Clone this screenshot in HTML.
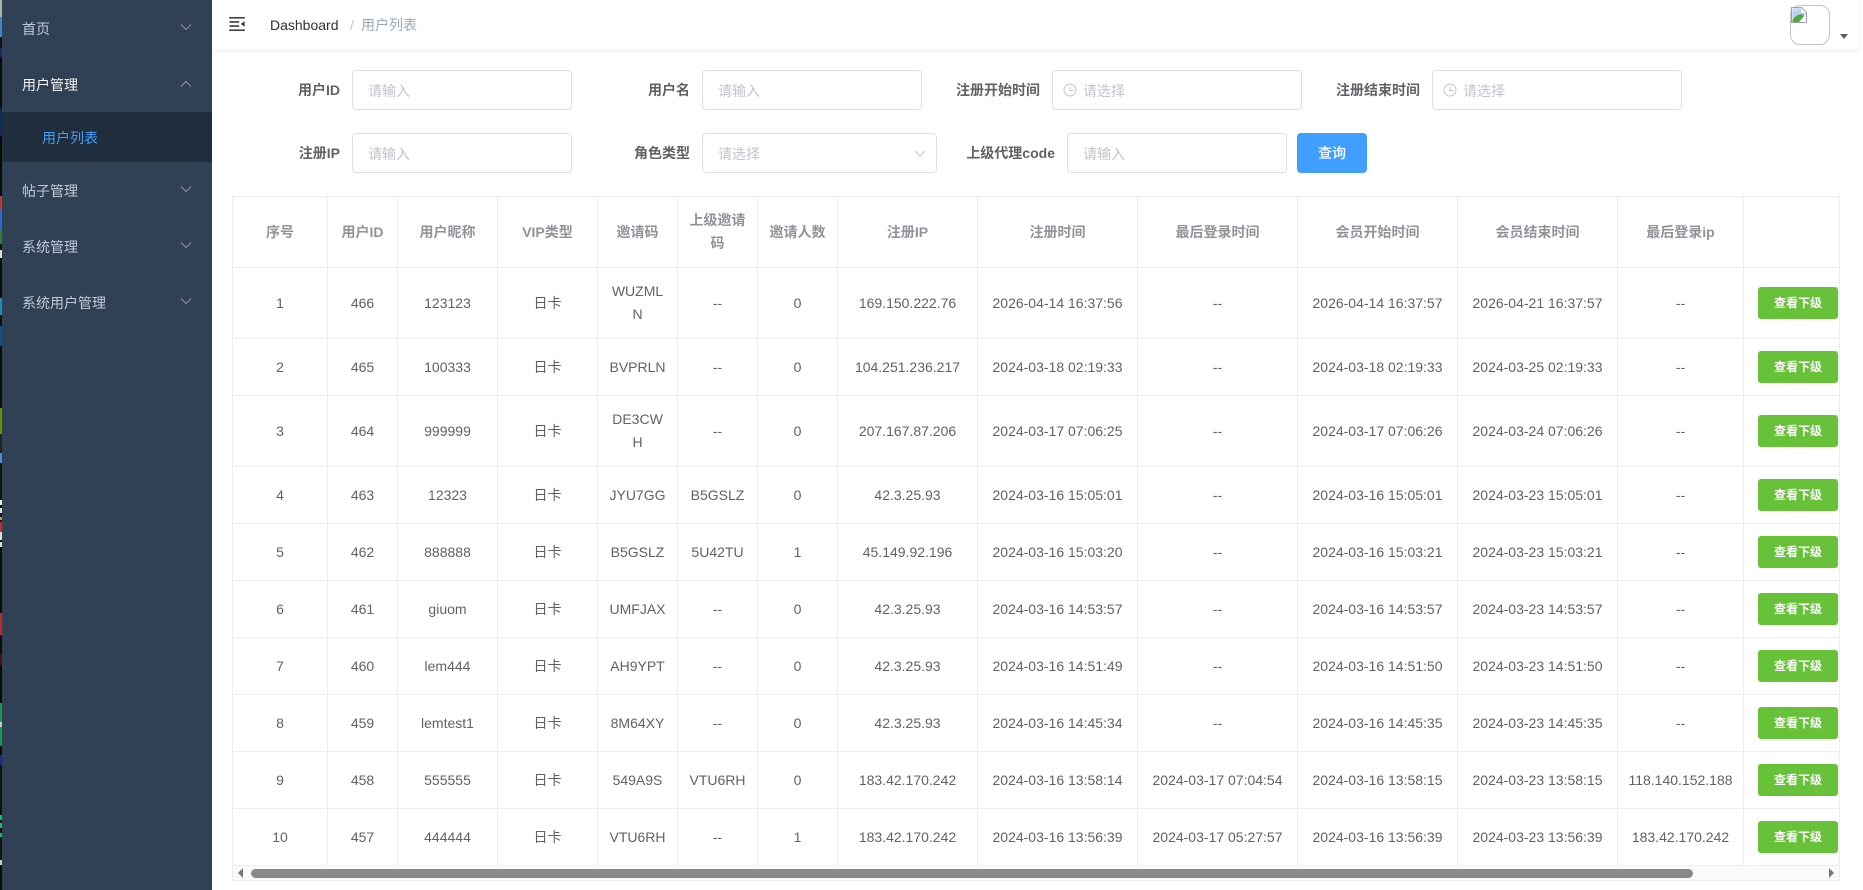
<!DOCTYPE html>
<html lang="zh-CN"><head><meta charset="utf-8"><title>用户列表</title>
<style>
*{box-sizing:border-box}
html,body{margin:0;padding:0;width:1863px;height:890px;overflow:hidden;background:#fff;font-family:"Liberation Sans","Noto Sans CJK SC",sans-serif;font-size:14px;color:#606266}
#strip{position:absolute;left:0;top:0;width:2px;height:890px;background:linear-gradient(to bottom,#b0b0b0 0,#b0b0b0 17px,#3a87c8 17px,#3a87c8 37px,#111 37px,#111 48px,#1a2a5a 48px,#1a2a5a 57px,#0a0a0a 57px,#0a0a0a 108px,#0f2a5c 108px,#0f2a5c 136px,#0a0a0a 136px,#0a0a0a 196px,#c0392b 196px,#c0392b 210px,#2a6ad0 210px,#2a6ad0 230px,#2e7d32 230px,#2e7d32 244px,#111 244px,#111 250px,#ddd 250px,#ddd 258px,#0a0a0a 258px,#0a0a0a 298px,#1a8fb5 298px,#1a8fb5 315px,#111 315px,#111 326px,#0e4f8a 326px,#0e4f8a 346px,#0a0a0a 346px,#0a0a0a 408px,#6b8e00 408px,#6b8e00 434px,#222 434px,#222 453px,#4a90d9 453px,#4a90d9 463px,#111 463px,#111 500px,#eee 500px,#eee 505px,#111 505px,#111 508px,#ddd 508px,#ddd 513px,#111 513px,#111 517px,#e89000 517px,#e89000 520px,#111 520px,#111 522px,#c62828 522px,#c62828 532px,#ddd 532px,#ddd 540px,#111 540px,#111 542px,#ddd 542px,#ddd 547px,#0a0a0a 547px,#0a0a0a 613px,#c62828 613px,#c62828 635px,#0a0a0a 635px,#0a0a0a 654px,#4a1020 654px,#4a1020 665px,#0a0a0a 665px,#0a0a0a 703px,#1a9a4a 703px,#1a9a4a 722px,#ccc 722px,#ccc 727px,#1a9a4a 727px,#1a9a4a 746px,#0a0a0a 746px,#0a0a0a 755px,#1a2a90 755px,#1a2a90 765px,#111 765px,#111 815px,#10c070 815px,#10c070 820px,#111 820px,#111 823px,#10c070 823px,#10c070 828px,#111 828px,#111 833px,#10c070 833px,#10c070 837px,#111 837px,#111 860px,#ccc 860px,#ccc 865px,#0a0a0a 865px)}
#side{position:absolute;left:2px;top:0;width:210px;height:890px;background:#304156;color:#bfcbd9}
.mi{position:absolute;left:0;width:210px;height:56px;line-height:56px;padding-left:20px}
.mi.lo{line-height:58px}
.mi svg{position:absolute;left:178px;top:22px}
.sub{position:absolute;left:0;top:112px;width:210px;height:50px;line-height:53px;padding-left:40px;background:#1f2d3d;color:#409eff}
#hd{position:absolute;left:212px;top:0;width:1647px;height:50px;background:#fff;box-shadow:0 1px 4px rgba(0,21,41,.08)}
.bc{position:absolute;top:0;line-height:50px}
.lb{position:absolute;font-weight:700;line-height:40px;color:#606266;white-space:nowrap}
.ip{position:absolute;height:40px;border:1px solid #dcdfe6;border-radius:4px;background:#fff;line-height:40px;color:#c0c4cc;padding-left:15px;white-space:nowrap}
.ip.d{padding-left:30px}
.ip svg{position:absolute}
#btn{position:absolute;left:1297px;top:133px;width:70px;height:40px;border-radius:4px;background:#409eff;color:#fff;text-align:center;line-height:40px;font-weight:500}
#tw{position:absolute;left:232px;top:196px;width:1608px;height:685px;border:1px solid #ebeef5;overflow:hidden}
table{border-collapse:separate;border-spacing:0;table-layout:fixed;width:1607px}
th,td{padding:12px 10px;border-right:1px solid #ebeef5;border-bottom:1px solid #ebeef5;text-align:center;vertical-align:middle;line-height:23px;font-size:14px;overflow:hidden}
td{color:#606266;font-weight:400;white-space:nowrap}
th{color:#909399;font-weight:700}
th:nth-child(1),td:nth-child(1),td:last-child,th:last-child{padding-left:0;padding-right:0}
td:last-child,th:last-child{border-right:0;text-align:left;padding-left:14px}
tr.n td{height:57px}tr.w td,tr.h th{height:71px}
.b{display:block;width:80px;height:32px;line-height:32px;background:#67c23a;color:#fff;font-size:12px;font-weight:700;text-align:center;border-radius:3px}
#sb{position:absolute;left:0;top:669px;width:1606px;height:14px;background:#fafafa}
#th{position:absolute;left:18px;top:3px;width:1442px;height:9px;border-radius:5px;background:#8a8a8a}
.tri{position:absolute;width:0;height:0;border-top:5px solid transparent;border-bottom:5px solid transparent}
</style></head><body>
<div id="strip"></div>
<div id="side">
<div class="mi" style="top:1px">首页<svg width="12" height="8" viewBox="0 0 12 8"><path d="M1 1.5l5 5 5-5" fill="none" stroke="#909399" stroke-width="1"/></svg></div>
<div class="mi" style="top:57px;color:#f4f4f5">用户管理<svg style="top:23px" width="12" height="8" viewBox="0 0 12 8"><path d="M1 6.5l5-5 5 5" fill="none" stroke="#909399" stroke-width="1"/></svg></div>
<div class="sub">用户列表</div>
<div class="mi lo" style="top:162px">帖子管理<svg style="top:23px" width="12" height="8" viewBox="0 0 12 8"><path d="M1 1.5l5 5 5-5" fill="none" stroke="#909399" stroke-width="1"/></svg></div>
<div class="mi lo" style="top:218px">系统管理<svg style="top:23px" width="12" height="8" viewBox="0 0 12 8"><path d="M1 1.5l5 5 5-5" fill="none" stroke="#909399" stroke-width="1"/></svg></div>
<div class="mi lo" style="top:274px">系统用户管理<svg style="top:23px" width="12" height="8" viewBox="0 0 12 8"><path d="M1 1.5l5 5 5-5" fill="none" stroke="#909399" stroke-width="1"/></svg></div>
</div>
<div id="hd">
<svg style="position:absolute;left:15px;top:14px;transform:rotate(180deg)" width="20" height="20" viewBox="0 0 1024 1024"><path fill="#222" d="M408 442h480c4.4 0 8-3.6 8-8v-56c0-4.4-3.6-8-8-8H408c-4.4 0-8 3.6-8 8v56c0 4.4 3.6 8 8 8zm-8 204c0 4.4 3.6 8 8 8h480c4.4 0 8-3.6 8-8v-56c0-4.4-3.6-8-8-8H408c-4.4 0-8 3.6-8 8v56zm504-486H120c-4.4 0-8 3.6-8 8v56c0 4.4 3.6 8 8 8h784c4.4 0 8-3.6 8-8v-56c0-4.4-3.6-8-8-8zm0 632H120c-4.4 0-8 3.6-8 8v56c0 4.4 3.6 8 8 8h784c4.4 0 8-3.6 8-8v-56c0-4.4-3.6-8-8-8zM142.4 642.1L298.7 519a8.84 8.84 0 0 0 0-13.9L142.4 381.9c-5.8-4.6-14.4-.5-14.4 6.9v246.3a8.9 8.9 0 0 0 14.4 7z"/></svg>
<span class="bc" style="left:58px;color:#303133">Dashboard</span>
<span class="bc" style="left:138px;color:#c0c4cc">/</span>
<span class="bc" style="left:149px;color:#97a8be">用户列表</span>
<div style="position:absolute;left:1578px;top:5px;width:40px;height:40px;border:1px solid #c4c4c4;border-radius:10px"></div>
<svg style="position:absolute;left:1578px;top:6px" width="18" height="18" viewBox="0 0 18 18"><path d="M1.5 1.5h10l5 5v10h-15z" fill="#fff" stroke="#a0a0a0" stroke-width="1"/><path d="M2.5 2.5h8.5v4.5h4.5v4l-13 3z" fill="#b8cdf5"/><path d="M2.5 16h7l5-6-3-2q-6 1-9 6z" fill="#4fa83a"/><path d="M9 16l6-7 1 1-5 6z" fill="#fff"/><path d="M4 5q2-2 4 0z" fill="#fff"/></svg>
<div style="position:absolute;left:1628px;top:34px;width:0;height:0;border-left:4px solid transparent;border-right:4px solid transparent;border-top:5px solid #5a5e66"></div>
</div>

<span class="lb" style="right:1523px;top:70px">用户ID</span>
<div class="ip" style="left:352px;top:70px;width:220px">请输入</div>
<span class="lb" style="right:1173px;top:70px">用户名</span>
<div class="ip" style="left:702px;top:70px;width:220px">请输入</div>
<span class="lb" style="right:823px;top:70px">注册开始时间</span>
<div class="ip d" style="left:1052px;top:70px;width:250px"><svg style="left:10px;top:12px" width="14" height="14" viewBox="0 0 14 14"><circle cx="7" cy="7" r="6" fill="none" stroke="#c0c4cc"/><path d="M7 3.5V7.5H10.5" fill="none" stroke="#c0c4cc"/></svg>请选择</div>
<span class="lb" style="right:443px;top:70px">注册结束时间</span>
<div class="ip d" style="left:1432px;top:70px;width:250px"><svg style="left:10px;top:12px" width="14" height="14" viewBox="0 0 14 14"><circle cx="7" cy="7" r="6" fill="none" stroke="#c0c4cc"/><path d="M7 3.5V7.5H10.5" fill="none" stroke="#c0c4cc"/></svg>请选择</div>

<span class="lb" style="right:1523px;top:133px">注册IP</span>
<div class="ip" style="left:352px;top:133px;width:220px">请输入</div>
<span class="lb" style="right:1173px;top:133px">角色类型</span>
<div class="ip" style="left:702px;top:133px;width:235px">请选择<svg style="left:211px;top:16px" width="12" height="8" viewBox="0 0 12 8"><path d="M1 1l5 5.5L11 1" fill="none" stroke="#c0c4cc"/></svg></div>
<span class="lb" style="right:808px;top:133px">上级代理code</span>
<div class="ip" style="left:1067px;top:133px;width:220px">请输入</div>
<div id="btn">查询</div>

<div id="tw">
<table>
<colgroup><col style="width:95px"><col style="width:70px"><col style="width:100px"><col style="width:100px"><col style="width:80px"><col style="width:80px"><col style="width:80px"><col style="width:140px"><col style="width:160px"><col style="width:160px"><col style="width:160px"><col style="width:160px"><col style="width:126px"><col style="width:96px"></colgroup>
<tr class="h"><th>序号</th><th>用户ID</th><th>用户昵称</th><th>VIP类型</th><th>邀请码</th><th>上级邀请码</th><th>邀请人数</th><th>注册IP</th><th>注册时间</th><th>最后登录时间</th><th>会员开始时间</th><th>会员结束时间</th><th>最后登录ip</th><th></th></tr>
<tr class="w"><td>1</td><td>466</td><td>123123</td><td>日卡</td><td>WUZML<br>N</td><td>--</td><td>0</td><td>169.150.222.76</td><td>2026-04-14 16:37:56</td><td>--</td><td>2026-04-14 16:37:57</td><td>2026-04-21 16:37:57</td><td>--</td><td><span class="b">查看下级</span></td></tr>
<tr class="n"><td>2</td><td>465</td><td>100333</td><td>日卡</td><td>BVPRLN</td><td>--</td><td>0</td><td>104.251.236.217</td><td>2024-03-18 02:19:33</td><td>--</td><td>2024-03-18 02:19:33</td><td>2024-03-25 02:19:33</td><td>--</td><td><span class="b">查看下级</span></td></tr>
<tr class="w"><td>3</td><td>464</td><td>999999</td><td>日卡</td><td>DE3CW<br>H</td><td>--</td><td>0</td><td>207.167.87.206</td><td>2024-03-17 07:06:25</td><td>--</td><td>2024-03-17 07:06:26</td><td>2024-03-24 07:06:26</td><td>--</td><td><span class="b">查看下级</span></td></tr>
<tr class="n"><td>4</td><td>463</td><td>12323</td><td>日卡</td><td>JYU7GG</td><td>B5GSLZ</td><td>0</td><td>42.3.25.93</td><td>2024-03-16 15:05:01</td><td>--</td><td>2024-03-16 15:05:01</td><td>2024-03-23 15:05:01</td><td>--</td><td><span class="b">查看下级</span></td></tr>
<tr class="n"><td>5</td><td>462</td><td>888888</td><td>日卡</td><td>B5GSLZ</td><td>5U42TU</td><td>1</td><td>45.149.92.196</td><td>2024-03-16 15:03:20</td><td>--</td><td>2024-03-16 15:03:21</td><td>2024-03-23 15:03:21</td><td>--</td><td><span class="b">查看下级</span></td></tr>
<tr class="n"><td>6</td><td>461</td><td>giuom</td><td>日卡</td><td>UMFJAX</td><td>--</td><td>0</td><td>42.3.25.93</td><td>2024-03-16 14:53:57</td><td>--</td><td>2024-03-16 14:53:57</td><td>2024-03-23 14:53:57</td><td>--</td><td><span class="b">查看下级</span></td></tr>
<tr class="n"><td>7</td><td>460</td><td>lem444</td><td>日卡</td><td>AH9YPT</td><td>--</td><td>0</td><td>42.3.25.93</td><td>2024-03-16 14:51:49</td><td>--</td><td>2024-03-16 14:51:50</td><td>2024-03-23 14:51:50</td><td>--</td><td><span class="b">查看下级</span></td></tr>
<tr class="n"><td>8</td><td>459</td><td>lemtest1</td><td>日卡</td><td>8M64XY</td><td>--</td><td>0</td><td>42.3.25.93</td><td>2024-03-16 14:45:34</td><td>--</td><td>2024-03-16 14:45:35</td><td>2024-03-23 14:45:35</td><td>--</td><td><span class="b">查看下级</span></td></tr>
<tr class="n"><td>9</td><td>458</td><td>555555</td><td>日卡</td><td>549A9S</td><td>VTU6RH</td><td>0</td><td>183.42.170.242</td><td>2024-03-16 13:58:14</td><td>2024-03-17 07:04:54</td><td>2024-03-16 13:58:15</td><td>2024-03-23 13:58:15</td><td>118.140.152.188</td><td><span class="b">查看下级</span></td></tr>
<tr class="n"><td>10</td><td>457</td><td>444444</td><td>日卡</td><td>VTU6RH</td><td>--</td><td>1</td><td>183.42.170.242</td><td>2024-03-16 13:56:39</td><td>2024-03-17 05:27:57</td><td>2024-03-16 13:56:39</td><td>2024-03-23 13:56:39</td><td>183.42.170.242</td><td><span class="b">查看下级</span></td></tr>
</table>
<div id="sb"><div class="tri" style="left:5px;top:2px;border-right:5px solid #777"></div><div id="th"></div><div class="tri" style="left:1596px;top:2px;border-left:5px solid #777"></div></div>
</div>
</body></html>
